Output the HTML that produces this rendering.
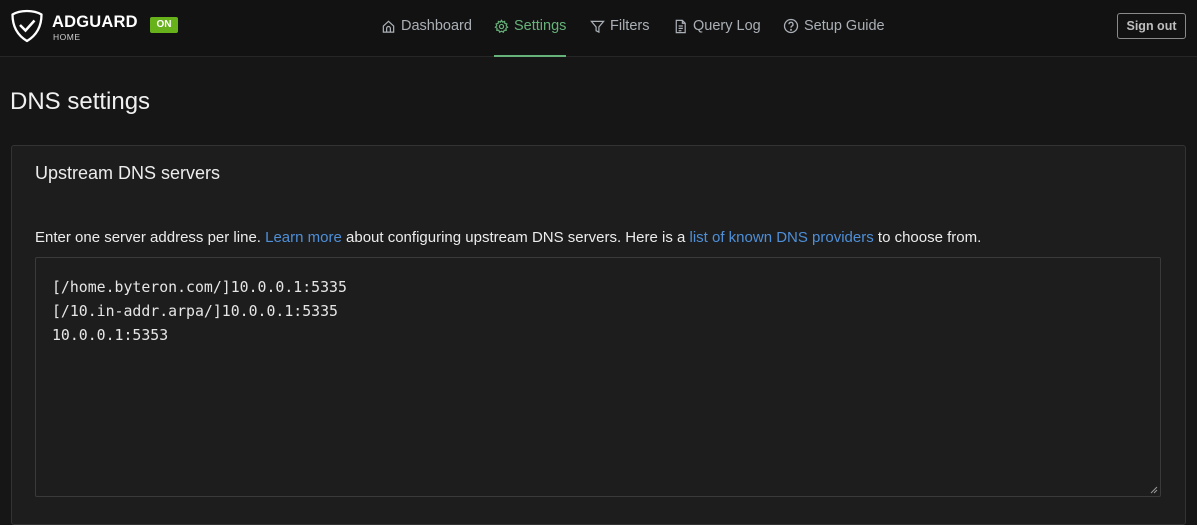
<!DOCTYPE html>
<html><head><meta charset="utf-8">
<style>
*{box-sizing:border-box;margin:0;padding:0}
body{width:1197px;height:507px;overflow:hidden;background:#161616;font-family:"Liberation Sans",sans-serif;color:#e6e6e6;position:relative}
.hdr{position:absolute;left:0;top:0;width:1197px;height:57px;background:#121212;border-bottom:1px solid #262626}
.logo{position:absolute;left:10px;top:9px}
.brand{position:absolute;left:52px;top:13px;font-weight:bold;font-size:16.5px;color:#fff;letter-spacing:0.2px}
.home{position:absolute;left:53px;top:32px;font-size:8.5px;color:#cfcfcf;letter-spacing:0.5px}
.on{position:absolute;left:150px;top:17px;width:28px;height:16px;background:#67b21a;border-radius:2px;color:#fff;font-weight:bold;font-size:10px;text-align:center;line-height:16px}
.nav{position:absolute;top:18px;font-size:14.5px;color:#aab0b6;display:flex;align-items:center;gap:5px}
.nav svg{stroke:currentColor;fill:none;stroke-width:1.3}
.act{color:#67b279}
.uline{position:absolute;left:494px;top:55px;width:72px;height:2px;background:#67b279}
.so{position:absolute;left:1117px;top:13px;width:69px;height:26px;border:1px solid #8a8a8a;border-radius:3px;color:#bfbfbf;font-weight:bold;font-size:12.5px;text-align:center;line-height:24px}
h1{position:absolute;left:10px;top:88px;font-size:24px;font-weight:normal;color:#f0f0f0}
.card{position:absolute;left:11px;top:145px;width:1175px;height:380px;background:#1d1d1d;border:1px solid #333;border-radius:3px}
.ct{position:absolute;left:35px;top:163px;font-size:18px;color:#ececec}
.desc{position:absolute;left:35px;top:229px;font-size:15px;color:#ececec}
.desc a{color:#4e8fd8;text-decoration:none}
.ta{position:absolute;left:35px;top:257px;width:1126px;height:240px;border:1px solid #3a3a3a;border-radius:2px;background:#1d1d1d;padding:17px 16px;font-family:"DejaVu Sans Mono","Liberation Mono",monospace;font-size:14.85px;line-height:24px;color:#e6e6e6;white-space:pre}
.grip{position:absolute;left:1150px;top:486px}
</style></head><body>
<div class="hdr"></div>
<svg class="logo" width="34" height="34" viewBox="0 0 34 34"><path d="M17 2 C10 2 5 4 2.5 5.5 C2.5 17 7 26 17 32 C27 26 31.5 17 31.5 5.5 C29 4 24 2 17 2Z" fill="none" stroke="#fff" stroke-width="2.3" stroke-linejoin="round"/><path d="M10 16 L15.5 21.5 L24.5 11.5" fill="none" stroke="#fff" stroke-width="2.5"/></svg>
<div class="brand">ADGUARD</div>
<div class="home">HOME</div>
<div class="on">ON</div>
<div class="nav" style="left:381px"><svg width="15" height="15" viewBox="0 0 16 16"><path d="M2.5 7.5 L8 2.5 L13.5 7.5 V14 H2.5Z M6 14 V10 A2 2 0 0 1 10 10 V14"/></svg>Dashboard</div>
<div class="nav act" style="left:494px"><svg width="15" height="15" viewBox="0 0 16 16"><circle cx="8" cy="8" r="2.2"/><path d="M8 1.5 L9.2 3.3 L11.3 2.6 L11.6 4.7 L13.7 5.2 L13 7.2 L14.5 8.8 L12.7 9.9 L13 12 L10.9 12 L10 14 L8 13 L6 14 L5.1 12 L3 12 L3.3 9.9 L1.5 8.8 L3 7.2 L2.3 5.2 L4.4 4.7 L4.7 2.6 L6.8 3.3Z"/></svg>Settings</div>
<div class="uline"></div>
<div class="nav" style="left:590px"><svg width="15" height="15" viewBox="0 0 16 16"><path d="M1.5 2.5 H14.5 L9.5 8.5 V14 L6.5 12.5 V8.5Z"/></svg>Filters</div>
<div class="nav" style="left:673px"><svg width="15" height="15" viewBox="0 0 16 16"><path d="M3.5 1.5 H10 L13 4.5 V14.5 H3.5Z M10 1.5 V4.5 H13 M6 7.5 H10.5 M6 10 H10.5 M6 12.5 H9"/></svg>Query Log</div>
<div class="nav" style="left:783px"><svg width="16" height="16" viewBox="0 0 16 16"><circle cx="8" cy="8" r="6.5"/><path d="M6 6.3 A2 2 0 1 1 8.6 8.2 C8 8.5 8 9 8 9.8"/><circle cx="8" cy="11.8" r="0.4"/></svg>Setup Guide</div>
<div class="so">Sign out</div>
<h1>DNS settings</h1>
<div class="card"></div>
<div class="ct">Upstream DNS servers</div>
<div class="desc">Enter one server address per line. <a>Learn more</a> about configuring upstream DNS servers. Here is a <a>list of known DNS providers</a> to choose from.</div>
<div class="ta">[/home.byteron.com/]10.0.0.1:5335
[/10.in-addr.arpa/]10.0.0.1:5335
10.0.0.1:5353</div>
<svg class="grip" width="8" height="8" viewBox="0 0 8 8"><path d="M1 7 L7 1 M4 7 L7 4" stroke="#999" stroke-width="1"/></svg>
</body></html>
